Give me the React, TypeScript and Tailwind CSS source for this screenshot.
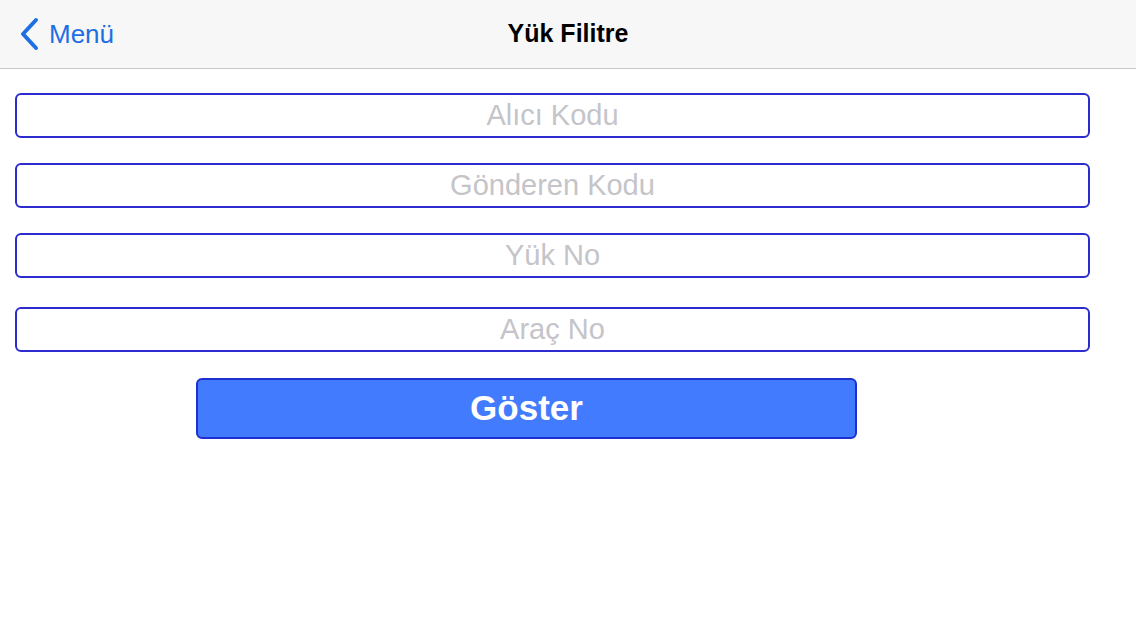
export default function App() {
  const fields = [
    { label: 'Alıcı Kodu', mt: 'mt-[24px]' },
    { label: 'Gönderen Kodu', mt: 'mt-[25px]' },
    { label: 'Yük No', mt: 'mt-[25px]' },
    { label: 'Araç No', mt: 'mt-[29px]' },
  ]

  return (
    <div className="min-h-[639px] w-[1136px] bg-white font-['Liberation_Sans',Arial,sans-serif]">
      <header className="relative flex h-[69px] items-center justify-center border-b border-[#c8c8cc] bg-[#f7f7f8]">
        <button className="absolute left-[18px] top-[17px] flex items-center gap-[9px] text-[#1e6fe3]">
          <svg width="22" height="34" viewBox="0 0 22 34" fill="none">
            <path d="M18 3L5 17l13 14" stroke="currentColor" strokeWidth="4" strokeLinecap="round" strokeLinejoin="round" />
          </svg>
          <span className="text-[26px] leading-none">Menü</span>
        </button>
        <h1 className="text-[25px] font-bold text-black">Yük Filitre</h1>
      </header>

      <div className="flex flex-col px-[15px]">
        {fields.map((f) => (
          <input
            key={f.label}
            placeholder={f.label}
            className={`${f.mt} h-[45px] w-[1075px] rounded-[6px] border-2 border-[#2b2bd0] bg-white text-center text-[29px] text-black outline-none placeholder:text-[#c4c4c9]`}
          />
        ))}
        <button className="ml-[181px] mt-[26px] h-[61px] w-[661px] rounded-[6px] border-2 border-[#1f2fd0] bg-[#427bfd] text-[35px] font-bold text-white">
          Göster
        </button>
      </div>
    </div>
  )
}
